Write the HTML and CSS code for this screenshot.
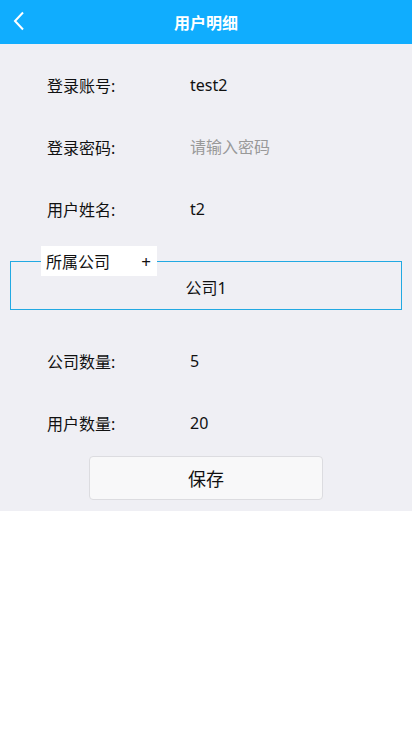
FILE: index.html
```html
<!DOCTYPE html>
<html lang="zh-CN">
  <head>
    <meta charset="UTF-8" />
    <meta name="viewport" content="width=device-width, initial-scale=1.0" />
    <title>用户明细</title>
    <link rel="stylesheet" href="styles.css">
  </head>
  <body>
    <header class="nav">
      <a class="nav-back" href="#">
        <svg width="12" height="20" viewBox="0 0 12 20">
          <path d="M10 1.5 L2 10 L10 18.5" fill="none" stroke="#fff" stroke-width="2" />
        </svg>
      </a>
      <h1 class="nav-title">用户明细</h1>
    </header>
    <main class="page">
      <div class="row">
        <label class="row-label">登录账号:</label>
        <span class="row-value">test2</span>
      </div>
      <div class="row">
        <label class="row-label" for="pwd">登录密码:</label>
        <input class="row-input" id="pwd" type="password" placeholder="请输入密码" />
      </div>
      <div class="row">
        <label class="row-label">用户姓名:</label>
        <span class="row-value">t2</span>
      </div>
      <fieldset class="company">
        <legend class="company-legend">
          <span>所属公司</span>
          <span class="company-add">+</span>
        </legend>
        <div class="company-item">公司1</div>
      </fieldset>
      <div class="row row-after">
        <label class="row-label">公司数量:</label>
        <span class="row-value">5</span>
      </div>
      <div class="row">
        <label class="row-label">用户数量:</label>
        <span class="row-value">20</span>
      </div>
      <button class="save" type="button">保存</button>
    </main>
  </body>
</html>
```

FILE: styles.css
```css
body {
  margin: 0;
  font-family: "Noto Sans", "Noto Sans CJK SC", sans-serif;
  color: #111;
  background-color: #fff;
}

.nav {
  height: 44px;
  background-color: #10adfe;
  display: flex;
  align-items: center;
  justify-content: center;
  position: relative;
}

.nav-back {
  position: absolute;
  left: 13px;
  top: 11px;
  display: block;
  line-height: 0;
}

.nav-title {
  margin: 0;
  font-size: 16px;
  font-weight: bold;
  color: #fff;
}

.page {
  background-color: #efeff4;
  padding: 11px 0 11px;
}

.row {
  height: 62px;
  box-sizing: border-box;
  padding-bottom: 3px;
  display: flex;
  align-items: center;
  padding-left: 47px;
  font-size: 16px;
}

.row-label {
  width: 143px;
}

.row-value {
  color: #111;
}

.row-input {
  border: none;
  background: transparent;
  font: inherit;
  padding: 0;
  outline: none;
  width: 180px;
}

.row-input::placeholder {
  color: #999;
}

.company {
  margin: 5px 10px 0;
  padding: 0 0 9px 30px;
  border: 1px solid #22a9e2;
  min-width: 0;
}

.company-legend {
  width: 116px;
  box-sizing: border-box;
  height: 30px;
  padding: 0 6px 0 5px;
  background-color: #fff;
  display: flex;
  align-items: center;
  justify-content: space-between;
  font-size: 16px;
}

.company-add {
  font-size: 17px;
}

.company-item {
  margin-left: -30px;
  text-align: center;
  font-size: 16px;
  line-height: 24px;
}

.row-after {
  margin-top: 21px;
}

.save {
  display: block;
  margin: 1px auto 0;
  width: 234px;
  height: 44px;
  padding-bottom: 2px;
  background-color: #f8f8f9;
  border: 1px solid #dcdce0;
  border-radius: 4px;
  font-family: inherit;
  font-size: 18px;
  color: #111;
}
```
